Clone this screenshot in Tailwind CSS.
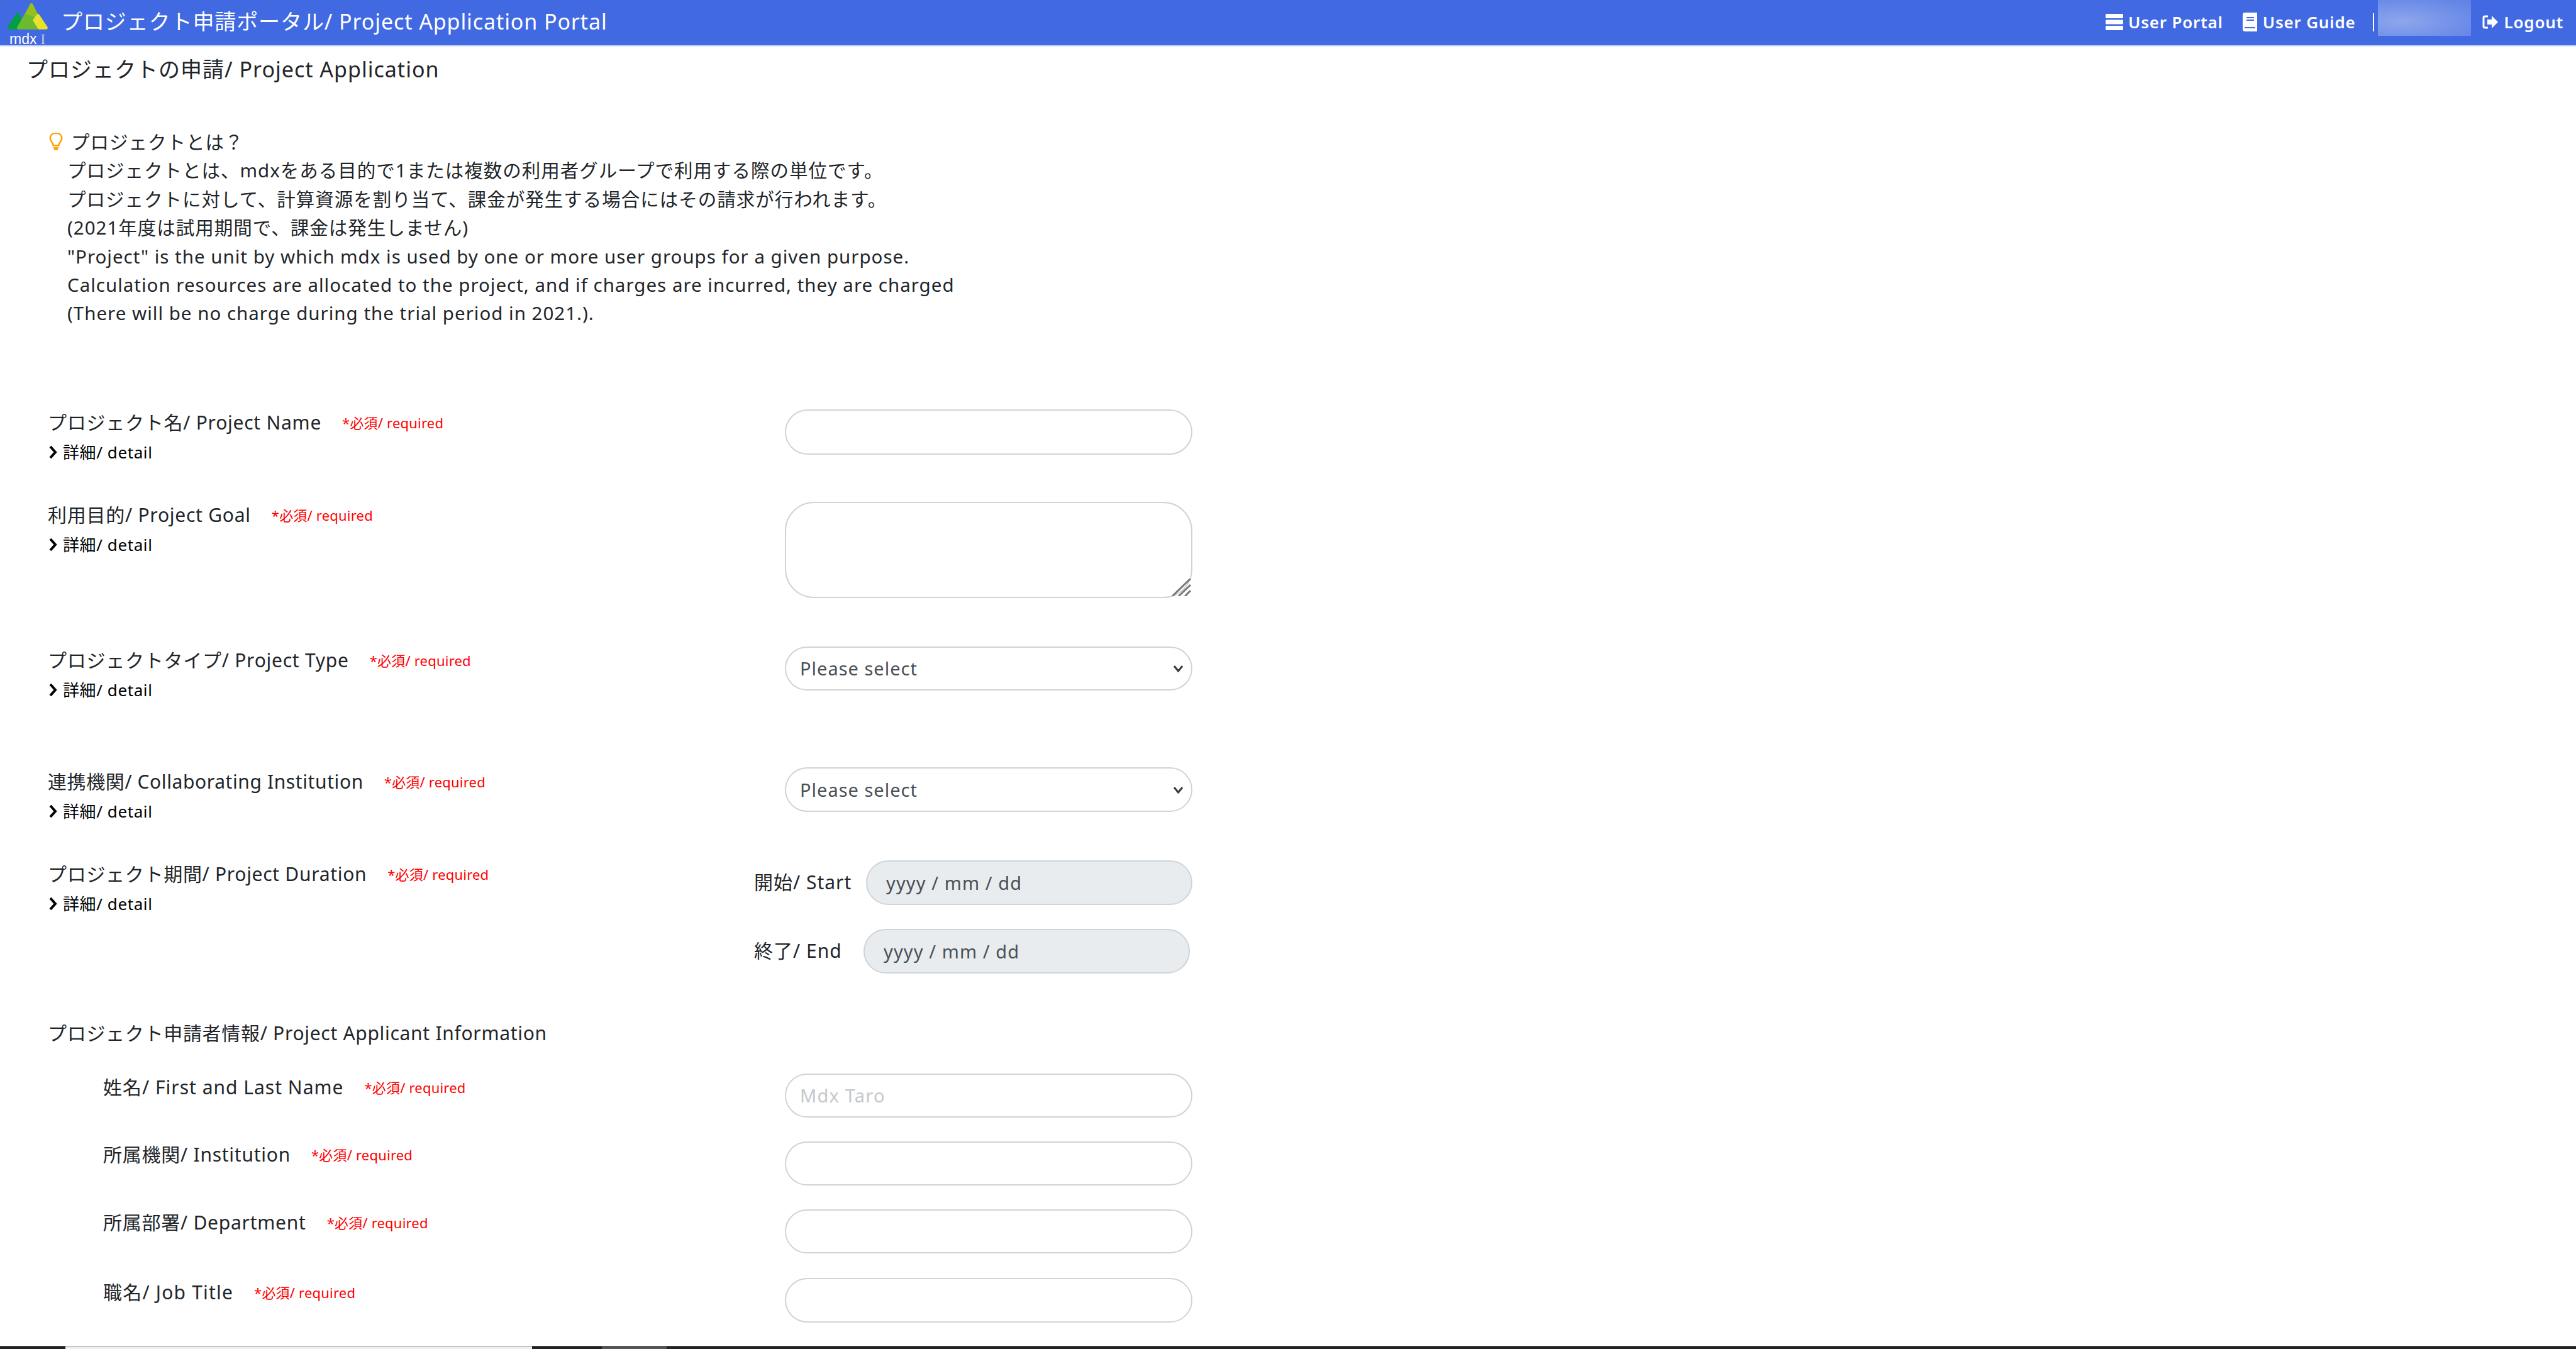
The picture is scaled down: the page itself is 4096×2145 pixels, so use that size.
<!DOCTYPE html>
<html lang="ja">
<head>
<meta charset="utf-8">
<title>Project Application Portal</title>
<script src="https://cdn.jsdelivr.net/npm/@tailwindcss/browser@4"></script>
</head>
<body class="font-['Noto_Sans','Noto_Sans_CJK_JP',sans-serif] bg-white text-[#212529]">
<div class="h-screen flex flex-col overflow-hidden">

    <!-- Header -->
    <header class="h-[74px] shrink-0 flex items-start bg-[#4169e1] border-b-2 border-[#cfdcf5] text-white">
        <div class="w-[85px] shrink-0">
            <svg class="block w-[85px] h-[50px]" viewBox="0 0 90 53">
                <path d="M15 47 L30 24 L38 47 Z" fill="#00a040" stroke="#00a040" stroke-width="5" stroke-linejoin="round"/>
                <path d="M31 47 L53 8 L60 24 L66 47 Z" fill="#6cbb2e" stroke="#6cbb2e" stroke-width="5" stroke-linejoin="round"/>
                <path d="M53 8 L72 46 L60 26 L46 22 Z" fill="#94c11f" stroke="#94c11f" stroke-width="5" stroke-linejoin="round"/>
                <path d="M64 26 L78 47 L66 47 L58 34 Z" fill="#eae229" stroke="#eae229" stroke-width="5" stroke-linejoin="round"/>
            </svg>
            <div class="mt-[1px] pl-[15px] flex items-baseline h-[22px] leading-[22px] font-['Liberation_Sans'] text-[23px]">
                <span>mdx</span><span class="ml-[6px] font-['Liberation_Serif'] text-[#c8cdd6]">I</span>
            </div>
        </div>
        <span class="ml-[12px] mt-[13px] text-[34px] leading-[42px] tracking-[0.9px] whitespace-nowrap">プロジェクト申請ポータル/ Project Application Portal</span>
        <nav class="ml-auto mr-[20px] flex items-start text-[26px] leading-[36px] font-semibold tracking-[0.8px] whitespace-nowrap">
            <a class="mt-[17px] flex items-center gap-[8px]">
                <svg class="w-[28px] h-[26px]" viewBox="0 0 28 26" fill="#ffffff"><rect y="0" width="28" height="7" rx="1.5"/><rect y="9.5" width="28" height="7" rx="1.5"/><rect y="19" width="28" height="7" rx="1.5"/></svg>
                User Portal
            </a>
            <a class="mt-[17px] ml-[31px] flex items-center gap-[9px]">
                <svg class="w-[23px] h-[30px]" viewBox="0 0 23 30" fill="#ffffff"><path d="M3 0 H23 V30 H4 Q0 30 0 26 V4 Q0 0 3 0 Z"/><rect x="6" y="7" width="12" height="2" fill="#4169e1"/><rect x="6" y="11" width="12" height="2" fill="#4169e1"/><rect x="3" y="23" width="17" height="2" fill="#4169e1"/></svg>
                User Guide
            </a>
            <div class="mt-[21px] ml-[27px] w-[2px] h-[29px] bg-white"></div>
            <div class="ml-[6px] w-[148px] h-[57px] bg-[radial-gradient(ellipse_at_25%_60%,#8fa6ec,#6f8fe8_60%,#5f80e6)]"></div>
            <a class="mt-[17px] ml-[18px] flex items-center gap-[10px]">
                <svg class="w-[25px] h-[24px]" viewBox="0 0 25 24"><path d="M9 3 H4 Q2 3 2 5 V19 Q2 21 4 21 H9" fill="none" stroke="#ffffff" stroke-width="3"/><path d="M8 8 H15 V2 L25 12 L15 22 V16 H8 Z" fill="#ffffff"/></svg>
                Logout
            </a>
        </nav>
    </header>

    <main class="flex-1 min-h-0 overflow-hidden">
        <h1 class="ml-[42px] mt-[15px] text-[34px] leading-[42px] tracking-[1px] whitespace-nowrap">プロジェクトの申請/ Project Application</h1>

        <!-- What is a project -->
        <section class="ml-[107px] mt-[72px] text-[29.5px] leading-[45.4px] tracking-[1px] whitespace-nowrap">
            <div class="-ml-[29px] h-[45.4px] flex items-center gap-[13px]">
                <svg class="w-[22px] h-[29px]" viewBox="0 0 26 34" fill="none"><path d="M8 24 C8 19 2 16 2 10 A11 9.5 0 0 1 24 10 C24 16 18 19 18 24 Z" stroke="#ffa50a" stroke-width="3"/><path d="M8 27 H18 L16 33 H10 Z" fill="#ffa50a"/></svg>
                <span>プロジェクトとは？</span>
            </div>
            <p>プロジェクトとは、mdxをある目的で1または複数の利用者グループで利用する際の単位です。</p>
            <p>プロジェクトに対して、計算資源を割り当て、課金が発生する場合にはその請求が行われます。</p>
            <p>(2021年度は試用期間で、課金は発生しません)</p>
            <p>"Project" is the unit by which mdx is used by one or more user groups for a given purpose.</p>
            <p>Calculation resources are allocated to the project, and if charges are incurred, they are charged</p>
            <p>(There will be no charge during the trial period in 2021.).</p>
        </section>

        <!-- Form -->
        <form class="ml-[76px] mt-[130px] w-[1830px]">
            <div class="flex items-start">
                <div class="w-[1172px]">
                    <div class="flex items-center gap-[33px] text-[30px] leading-[42px] tracking-[0.75px]"><span>プロジェクト名/ Project Name</span><span class="text-[22px] tracking-[0.2px] text-[#ff0000]">*必須/ required</span></div>
                    <div class="mt-[5px] flex items-center gap-[8px] text-[26px] leading-[42px] tracking-[0.6px] text-black"><svg class="w-[16px] h-[24px]" viewBox="0 0 16 24"><path d="M4 3 L12 12 L4 21" fill="none" stroke="#000000" stroke-width="4"/></svg>詳細/ detail</div>
                </div>
                <input class="w-[648px] h-[72px] px-[22px] text-[29px] rounded-full border-2 border-[#ced4da] bg-white text-[#495057]">
            </div>

            <div class="mt-[58px] flex items-start">
                <div class="w-[1172px]">
                    <div class="flex items-center gap-[33px] text-[30px] leading-[42px] tracking-[0.75px]"><span>利用目的/ Project Goal</span><span class="text-[22px] tracking-[0.2px] text-[#ff0000]">*必須/ required</span></div>
                    <div class="mt-[5px] flex items-center gap-[8px] text-[26px] leading-[42px] tracking-[0.6px] text-black"><svg class="w-[16px] h-[24px]" viewBox="0 0 16 24"><path d="M4 3 L12 12 L4 21" fill="none" stroke="#000000" stroke-width="4"/></svg>詳細/ detail</div>
                </div>
                <div class="relative">
                    <textarea class="block w-[648px] h-[153px] resize-none rounded-[46px] border-2 border-[#ced4da] bg-white"></textarea>
                    <svg class="absolute right-[2px] bottom-[3px] w-[31px] h-[28px]" viewBox="0 0 31 28" stroke="#777777" stroke-width="3"><path d="M1 28 L30 0"/><path d="M11 28 L30 10"/><path d="M21 28 L30 19"/></svg>
                </div>
            </div>

            <div class="mt-[77px] flex items-start">
                <div class="w-[1172px] pt-[1px]">
                    <div class="flex items-center gap-[33px] text-[30px] leading-[42px] tracking-[0.75px]"><span>プロジェクトタイプ/ Project Type</span><span class="text-[22px] tracking-[0.2px] text-[#ff0000]">*必須/ required</span></div>
                    <div class="mt-[5px] flex items-center gap-[8px] text-[26px] leading-[42px] tracking-[0.6px] text-black"><svg class="w-[16px] h-[24px]" viewBox="0 0 16 24"><path d="M4 3 L12 12 L4 21" fill="none" stroke="#000000" stroke-width="4"/></svg>詳細/ detail</div>
                </div>
                <div class="relative">
                    <select class="block appearance-none w-[648px] h-[70px] px-[22px] text-[29px] tracking-[1px] rounded-full border-2 border-[#ced4da] bg-white text-[#495057]"><option>Please select</option></select>
                    <svg class="absolute right-[14px] top-[29px] w-[17px] h-[12px]" viewBox="0 0 17 12"><path d="M2 2 L8.5 10 L15 2" fill="none" stroke="#343a40" stroke-width="3"/></svg>
                </div>
            </div>

            <div class="mt-[102px] flex items-start">
                <div class="w-[1172px] pt-[2px]">
                    <div class="flex items-center gap-[33px] text-[30px] leading-[42px] tracking-[0.6px]"><span>連携機関/ Collaborating Institution</span><span class="text-[22px] tracking-[0.2px] text-[#ff0000]">*必須/ required</span></div>
                    <div class="mt-[5px] flex items-center gap-[8px] text-[26px] leading-[42px] tracking-[0.6px] text-black"><svg class="w-[16px] h-[24px]" viewBox="0 0 16 24"><path d="M4 3 L12 12 L4 21" fill="none" stroke="#000000" stroke-width="4"/></svg>詳細/ detail</div>
                </div>
                <div class="relative">
                    <select class="block appearance-none w-[648px] h-[71px] px-[22px] text-[29px] tracking-[1px] rounded-full border-2 border-[#ced4da] bg-white text-[#495057]"><option>Please select</option></select>
                    <svg class="absolute right-[14px] top-[30px] w-[17px] h-[12px]" viewBox="0 0 17 12"><path d="M2 2 L8.5 10 L15 2" fill="none" stroke="#343a40" stroke-width="3"/></svg>
                </div>
            </div>

            <div class="mt-[57px] flex items-start">
                <div class="w-[1123px] pt-[1px]">
                    <div class="flex items-center gap-[33px] text-[30px] leading-[42px] tracking-[0.7px]"><span>プロジェクト期間/ Project Duration</span><span class="text-[22px] tracking-[0.2px] text-[#ff0000]">*必須/ required</span></div>
                    <div class="mt-[5px] flex items-center gap-[8px] text-[26px] leading-[42px] tracking-[0.6px] text-black"><svg class="w-[16px] h-[24px]" viewBox="0 0 16 24"><path d="M4 3 L12 12 L4 21" fill="none" stroke="#000000" stroke-width="4"/></svg>詳細/ detail</div>
                </div>
                <div class="text-[30px] leading-[42px] tracking-[1px]">
                    <div class="flex items-center"><span class="w-[178px]">開始/ Start</span><input readonly value="yyyy / mm / dd" class="w-[519px] h-[71px] px-[30px] text-[29px] tracking-[1.1px] rounded-full border-2 border-[#ced4da] bg-[#e9ecef] text-[#495057]"></div>
                    <div class="mt-[38px] flex items-center"><span class="w-[174px]">終了/ End</span><input readonly value="yyyy / mm / dd" class="w-[519px] h-[71px] px-[30px] text-[29px] tracking-[1.1px] rounded-full border-2 border-[#ced4da] bg-[#e9ecef] text-[#495057]"></div>
                </div>
            </div>

            <h2 class="mt-[74px] text-[30px] leading-[42px] tracking-[0.7px] whitespace-nowrap">プロジェクト申請者情報/ Project Applicant Information</h2>

            <div class="mt-[43px] flex items-start">
                <div class="w-[1172px] pl-[88px] pt-[1px] flex items-center gap-[33px] text-[30px] leading-[42px] tracking-[1px]"><span>姓名/ First and Last Name</span><span class="text-[22px] tracking-[0.2px] text-[#ff0000]">*必須/ required</span></div>
                <input placeholder="Mdx Taro" class="w-[648px] h-[70px] px-[22px] text-[29px] tracking-[1.2px] rounded-full border-2 border-[#ced4da] bg-white placeholder:text-[#c4c8cc]">
            </div>
            <div class="mt-[38px] flex items-start">
                <div class="w-[1172px] pl-[88px] flex items-center gap-[33px] text-[30px] leading-[42px] tracking-[0.75px]"><span>所属機関/ Institution</span><span class="text-[22px] tracking-[0.2px] text-[#ff0000]">*必須/ required</span></div>
                <input class="w-[648px] h-[70px] rounded-full border-2 border-[#ced4da] bg-white">
            </div>
            <div class="mt-[38px] flex items-start">
                <div class="w-[1172px] pl-[88px] flex items-center gap-[33px] text-[30px] leading-[42px] tracking-[0.75px]"><span>所属部署/ Department</span><span class="text-[22px] tracking-[0.2px] text-[#ff0000]">*必須/ required</span></div>
                <input class="w-[648px] h-[70px] rounded-full border-2 border-[#ced4da] bg-white">
            </div>
            <div class="mt-[39px] flex items-start">
                <div class="w-[1172px] pl-[88px] pt-[2px] flex items-center gap-[33px] text-[30px] leading-[42px] tracking-[1.2px]"><span>職名/ Job Title</span><span class="text-[22px] tracking-[0.2px] text-[#ff0000]">*必須/ required</span></div>
                <input class="w-[648px] h-[71px] rounded-full border-2 border-[#ced4da] bg-white">
            </div>
        </form>
    </main>

    <!-- Bottom strip -->
    <div class="h-[5px] shrink-0 flex">
        <div class="w-[104px] bg-[#222222] border-t border-[#555555]"></div>
        <div class="w-[742px] bg-[#f0f0f0] border-t-2 border-[#c4c4c4]"></div>
        <div class="w-[111px] bg-[#222222] border-t border-[#555555]"></div>
        <div class="w-[103px] bg-[#555555]"></div>
        <div class="flex-1 bg-[#222222] border-t border-[#555555]"></div>
    </div>
</div>
</body>
</html>
